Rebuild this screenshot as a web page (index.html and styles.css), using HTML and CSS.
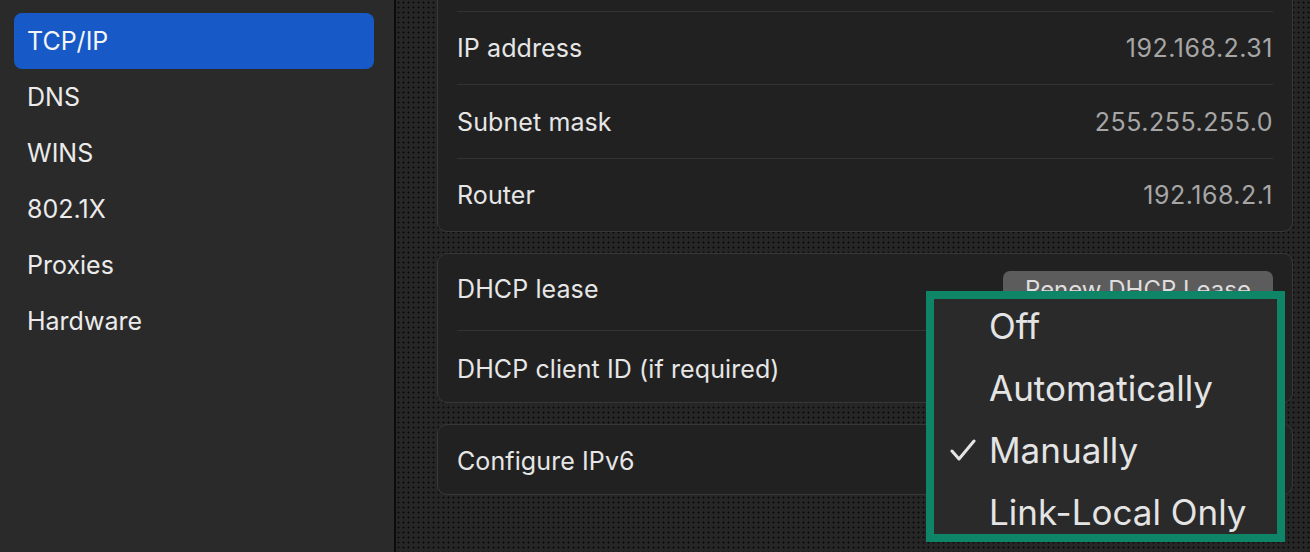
FILE: index.html
```html
<!DOCTYPE html>
<html>
<head>
<meta charset="utf-8">
<link rel="stylesheet" href="styles.css">
</head>
<body>
<div class="window">
  <nav class="sidebar">
    <div class="nav-item selected">TCP/IP</div>
    <div class="nav-item">DNS</div>
    <div class="nav-item">WINS</div>
    <div class="nav-item">802.1X</div>
    <div class="nav-item">Proxies</div>
    <div class="nav-item">Hardware</div>
  </nav>
  <main class="content">
    <section class="card card-top">
      <div class="row row-a"><span class="label">IP address</span><span class="value">192.168.2.31</span></div>
      <div class="row row-a"><span class="label">Subnet mask</span><span class="value">255.255.255.0</span></div>
      <div class="row row-a"><span class="label">Router</span><span class="value">192.168.2.1</span></div>
    </section>
    <section class="card">
      <div class="row row-b"><span class="label">DHCP lease</span><span class="button">Renew DHCP Lease</span></div>
      <div class="row row-b"><span class="label">DHCP client ID (if required)</span></div>
    </section>
    <section class="card">
      <div class="row row-c"><span class="label">Configure IPv6</span></div>
    </section>
  </main>
  <div class="menu">
    <div class="menu-list">
      <div class="menu-item">Off</div>
      <div class="menu-item">Automatically</div>
      <div class="menu-item checked"><svg class="check" viewBox="0 0 26 22" width="26" height="22"><path d="M2 12 L9 20 L24 2" fill="none" stroke="#e4e4e4" stroke-width="3" stroke-linecap="round" stroke-linejoin="round"/></svg>Manually</div>
      <div class="menu-item">Link-Local Only</div>
    </div>
  </div>
</div>
</body>
</html>
```
FILE: styles.css
```css
* { box-sizing: border-box; }
html, body {
  margin: 0;
  padding: 0;
  width: 1310px;
  height: 552px;
  overflow: hidden;
  font-family: Inter, "Noto Sans", "Liberation Sans", sans-serif;
}
.window {
  position: relative;
  display: flex;
  width: 1310px;
  height: 552px;
}
.sidebar {
  width: 396px;
  flex: none;
  background: #2a2a2a;
  border-right: 2px solid #0b0b0b;
  padding: 13px 20px 0 14px;
}
.nav-item {
  height: 56px;
  display: flex;
  align-items: center;
  padding-left: 13px;
  font-size: 25px;
  color: #ebebeb;
  border-radius: 8px;
}
.nav-item.selected {
  background: #1759c6;
  color: #f4f4f4;
}
.content {
  flex: 1;
  background-color: #262626;
  background-image: radial-gradient(circle, #0d0d0d 0.9px, transparent 1.2px);
  background-size: 5px 5px;
  padding: 0 17px 0 41px;
  display: flex;
  flex-direction: column;
  gap: 21px;
}
.card {
  background: #212121;
  border: 1px solid #383838;
  border-radius: 10px;
  padding: 0 19px;
}
.card-top {
  margin-top: -30px;
  padding-top: 40px;
}
.card-top .row:first-child { border-top: 1px solid #333; }
.row {
  display: flex;
  align-items: center;
  justify-content: space-between;
  border-bottom: 1px solid #333;
}
.row:last-child { border-bottom: none; }
.row-a { height: 74px; }
.row-a:last-child { height: 72px; }
.row-b { height: 71px; padding-top: 4px; }
.row-b:first-child { height: 77px; padding-top: 0; padding-bottom: 6px; }
.row-c { height: 69px; padding-top: 2px; }
.label {
  font-size: 25px;
  color: #e6e6e6;
  letter-spacing: 0.1px;
}
.value {
  font-size: 25px;
  color: #a6a6a6;
  letter-spacing: 0.5px;
}
.button {
  align-self: flex-start;
  margin-top: 17px;
  height: 40px;
  width: 270px;
  background: #5c5c5c;
  border-radius: 7px;
  color: #dedede;
  font-size: 24px;
  display: flex;
  justify-content: center;
  padding-top: 4px;
}
.menu {
  position: absolute;
  left: 926px;
  top: 291px;
  width: 359px;
  height: 251px;
  border: 8px solid #0e8566;
  background: #2a2a2a;
  overflow: hidden;
}
.menu-list {
  margin-top: -4px;
}
.menu-item {
  position: relative;
  height: 62px;
  display: flex;
  align-items: center;
  padding-left: 55px;
  font-size: 35px;
  color: #e4e4e4;
}
.check {
  position: absolute;
  left: 16px;
  top: 20px;
}
```
